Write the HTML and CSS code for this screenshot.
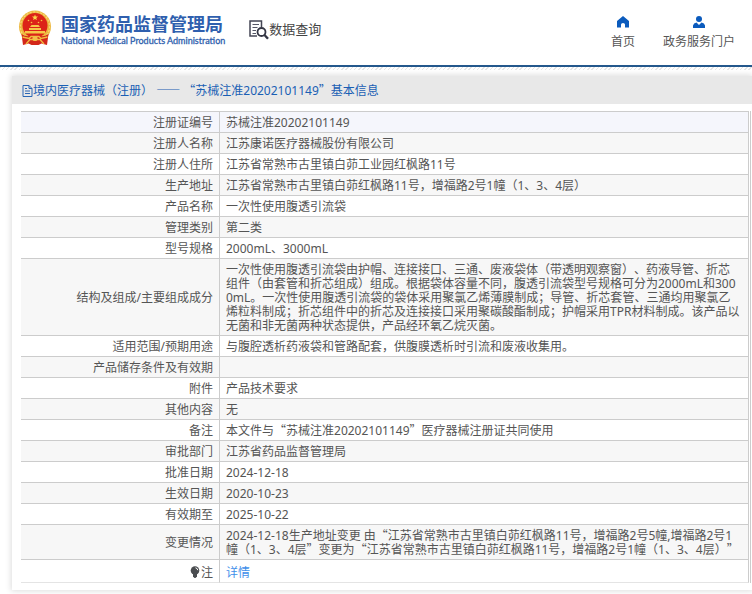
FILE: index.html
```html
<!DOCTYPE html>
<html lang="zh-CN">
<head>
<meta charset="utf-8">
<meta name="viewport" content="width=device-width, initial-scale=1">
<title>国家药品监督管理局 数据查询</title>
<link rel="stylesheet" href="styles.css">
</head>
<body>
<header class="header">
  <a class="brand" href="#">
    <svg class="emblem" viewBox="0 0 34 36" aria-hidden="true">
      <circle cx="17" cy="16.500" r="16" fill="#edb83f"/>
      <circle cx="17" cy="16.500" r="14.600" fill="none" stroke="#f7d77a" stroke-width="1.200" stroke-dasharray="2 1.500"/>
      <circle cx="17" cy="15.500" r="12.500" fill="#dc2318"/>
      <path d="M17 4.500l.8 2 2.200.1-1.700 1.400.6 2.100-1.900-1.200-1.900 1.200.6-2.100L14 6.600l2.200-.1z" fill="#fbd94b"/>
      <g fill="#f5c443"><circle cx="10.500" cy="10.500" r=".8"/><circle cx="13.500" cy="12.500" r=".8"/><circle cx="20.500" cy="12.500" r=".8"/><circle cx="23.500" cy="10.500" r=".8"/></g>
      <path d="M12 17l1.500-2h7l1.500 2zM11 18h12v2H11zM7 21h20v2.500H7z" fill="#f6c748"/>
      <path d="M3.500 24q5 3.500 9.500 1.500h8q4.500 2 9.500-1.500l-1.500 11-5.500-1.500-3 1.500h-7l-3-1.500L5 35z" fill="#d3271a"/>
      <path d="M4.500 27l6.500 1.500 2-2h8l2 2 6.500-1.500M8 34l4-4.500h10l4 4.500" fill="none" stroke="#f2bd3e" stroke-width="1.300"/>
      <circle cx="17" cy="28.500" r="2.600" fill="#f2c049"/>
    </svg>
    <span class="brand-text">
      <strong class="brand-cn">国家药品监督管理局</strong>
      <span class="brand-en">National Medical Products Administration</span>
    </span>
  </a>
  <a class="query" href="#">
    <svg class="query-icon" viewBox="0 0 20 20" aria-hidden="true">
      <path d="M12.500 7V1H1v15h7" fill="none" stroke="#444654" stroke-width="1.500"/>
      <path d="M3.500 4.500h6.500M3.500 7.500h5M3.500 10.500h3.500M3.500 13.500h3.500" stroke="#555766" stroke-width="1.200"/>
      <circle cx="12.500" cy="12" r="4" fill="#fff" stroke="#343644" stroke-width="1.800"/>
      <path d="M15.500 15l3.500 3.800" stroke="#343644" stroke-width="2.400"/>
    </svg>
    <span>数据查询</span>
  </a>
  <nav class="nav">
    <a href="#">
      <svg viewBox="0 0 12 12" aria-hidden="true"><path d="M6 0L0 5v6.500h4V8.500Q4 7 6 7t2 1.500v3h4V5z" fill="#0b5bbd"/></svg>
      <span>首页</span>
    </a>
    <a href="#">
      <svg viewBox="0 0 12 12" aria-hidden="true"><circle cx="6" cy="3" r="3" fill="#0b5bbd"/><path d="M0 12v-2.500Q.5 7 3.500 6.500L6 9l2.500-2.500q3 .5 3.500 3V12z" fill="#0b5bbd"/></svg>
      <span>政务服务门户</span>
    </a>
  </nav>
</header>
<div class="hatch"></div>
<main class="card">
  <h1 class="card-title">
    <svg class="doc-icon" viewBox="0 0 11 12" aria-hidden="true"><path d="M1 .5h6l3 3v8H1zM7 .5v3h3M3 3.500h2M3 6h5M3 8.500h5" fill="none" stroke="#2b67b5"/></svg>
    <span>境内医疗器械（注册） <span class="cjk">——</span> <span class="cjk">“</span>苏械注准20202101149<span class="cjk">”</span>基本信息</span>
  </h1>
  <div class="card-body">
    <table class="info">
      <tbody>
        <tr><th scope="row">注册证编号</th><td>苏械注准20202101149</td></tr>
        <tr><th scope="row">注册人名称</th><td>江苏康诺医疗器械股份有限公司</td></tr>
        <tr><th scope="row">注册人住所</th><td>江苏省常熟市古里镇白茆工业园红枫路11号</td></tr>
        <tr><th scope="row">生产地址</th><td>江苏省常熟市古里镇白茆红枫路11号，增福路2号1幢（1、3、4层）</td></tr>
        <tr><th scope="row">产品名称</th><td>一次性使用腹透引流袋</td></tr>
        <tr><th scope="row">管理类别</th><td>第二类</td></tr>
        <tr><th scope="row">型号规格</th><td>2000mL、3000mL</td></tr>
        <tr><th scope="row">结构及组成/主要组成成分</th><td>一次性使用腹透引流袋由护帽、连接接口、三通、废液袋体（带透明观察窗）、药液导管、折芯<br>组件（由套管和折芯组成）组成。根据袋体容量不同，腹透引流袋型号规格可分为2000mL和300<br>0mL。一次性使用腹透引流袋的袋体采用聚氯乙烯薄膜制成；导管、折芯套管、三通均用聚氯乙<br>烯粒料制成；折芯组件中的折芯及连接接口采用聚碳酸酯制成；护帽采用TPR材料制成。该产品以<br>无菌和非无菌两种状态提供，产品经环氧乙烷灭菌。</td></tr>
        <tr><th scope="row">适用范围/预期用途</th><td>与腹腔透析药液袋和管路配套，供腹膜透析时引流和废液收集用。</td></tr>
        <tr><th scope="row">产品储存条件及有效期</th><td></td></tr>
        <tr><th scope="row">附件</th><td>产品技术要求</td></tr>
        <tr><th scope="row">其他内容</th><td>无</td></tr>
        <tr><th scope="row">备注</th><td>本文件与<span class="cjk">“</span>苏械注准20202101149<span class="cjk">”</span>医疗器械注册证共同使用</td></tr>
        <tr><th scope="row">审批部门</th><td>江苏省药品监督管理局</td></tr>
        <tr><th scope="row">批准日期</th><td>2024-12-18</td></tr>
        <tr><th scope="row">生效日期</th><td>2020-10-23</td></tr>
        <tr><th scope="row">有效期至</th><td>2025-10-22</td></tr>
        <tr><th scope="row">变更情况</th><td>2024-12-18生产地址变更 由<span class="cjk">“</span>江苏省常熟市古里镇白茆红枫路11号，增福路2号5幢,增福路2号1<br>幢（1、3、4层<span class="cjk">”</span>变更为<span class="cjk">“</span>江苏省常熟市古里镇白茆红枫路11号，增福路2号1幢（1、3、4层）<span class="cjk">”</span></td></tr>
        <tr class="note"><th scope="row"><svg class="bulb" viewBox="0 0 10 12" aria-hidden="true"><circle cx="5" cy="4.500" r="4.300" fill="#4a4d50"/><path d="M3 8h4v2.500L5.500 12h-1L3 10.500z" fill="#4a4d50"/><path d="M5.500 1.800q2 .4 2.300 2.400" fill="none" stroke="#fff"/></svg>注</th><td><a href="#">详情</a></td></tr>
      </tbody>
    </table>
  </div>
</main>
</body>
</html>
```
FILE: styles.css
```css
* { box-sizing: border-box; }

body {
  margin: 0;
  padding-bottom: 4px;
  background: #fff;
  color: #555;
  font: 12px/14px "Noto Sans", "Noto Sans CJK SC", sans-serif;
  text-spacing-trim: space-all;
  overflow-x: hidden;
}

a { color: inherit; text-decoration: none; }

/* Full-width quotes and dashes; must not stretch the line box */
.cjk { font-family: "Noto Sans CJK SC", sans-serif; line-height: 0; }

.header {
  display: flex;
  align-items: flex-start;
  height: 67px;
  padding: 10px 17px 0 18px;
  border-bottom: 2px solid #24588c;
}

.brand { display: flex; gap: 9px; color: #2f5fae; }
.emblem { width: 34px; height: 36px; }
.brand-text { display: flex; flex-direction: column; padding-top: 3px; white-space: nowrap; }
.brand-cn { font-size: 18px; line-height: 22px; }
.brand-en { font: 9px/12px Lato, "Liberation Sans", sans-serif; -webkit-text-stroke: 0.3px; }

.query {
  display: flex;
  margin-left: 24px;
  padding-top: 10px;
  color: #444;
  font-size: 13px;
  line-height: 18px;
  white-space: nowrap;
}
.query-icon { width: 20px; height: 20px; }

.nav { display: flex; gap: 28px; margin-left: auto; padding-top: 6px; }
.nav a {
  display: flex;
  flex-direction: column;
  align-items: center;
  gap: 7px;
  white-space: nowrap;
}
.nav svg { width: 12px; height: 12px; }

.hatch {
  height: 3px;
  background: repeating-linear-gradient(135deg, #e6e6e6 0 1px, #fff 1px 3px);
}

.card {
  margin: 6px 0 0 12px;
  background: #fff;
  box-shadow: 0 0 6px 1px #ddd;
}

.card-title {
  display: flex;
  align-items: center;
  height: 28px;
  margin: 0;
  padding: 2px 0 0 10px;
  background: #e8e8e8;
  color: #1a5fb4;
  font-size: 12px;
  font-weight: 400;
}
.doc-icon { width: 11px; height: 12px; }

.card-body { padding: 7px 1px 7px 9px; }

.info {
  width: 100%;
  border-collapse: separate;
  border-spacing: 0;
  border-right: 1px solid #ccc;
  padding-right: 1px;
}
.info th,
.info td {
  height: 21px;
  padding: 4px 6px 2px;
  border-top: 1px solid #ccc;
  border-right: 1px solid #ccc;
  font-weight: 400;
}
.info th { width: 199px; text-align: right; }
.info td { padding-right: 0; white-space: nowrap; }
.info tr:nth-child(even) { background: #f7f7f7; }
.info tr:first-child { background: #f5f6fc; }
.info .note th,
.info .note td { height: 24px; padding-top: 6px; border-bottom: 1px solid #e4e4e4; }
.note a { color: #3f8fea; }
.bulb { width: 10px; height: 12px; margin-right: 1px; vertical-align: -1px; }
```
